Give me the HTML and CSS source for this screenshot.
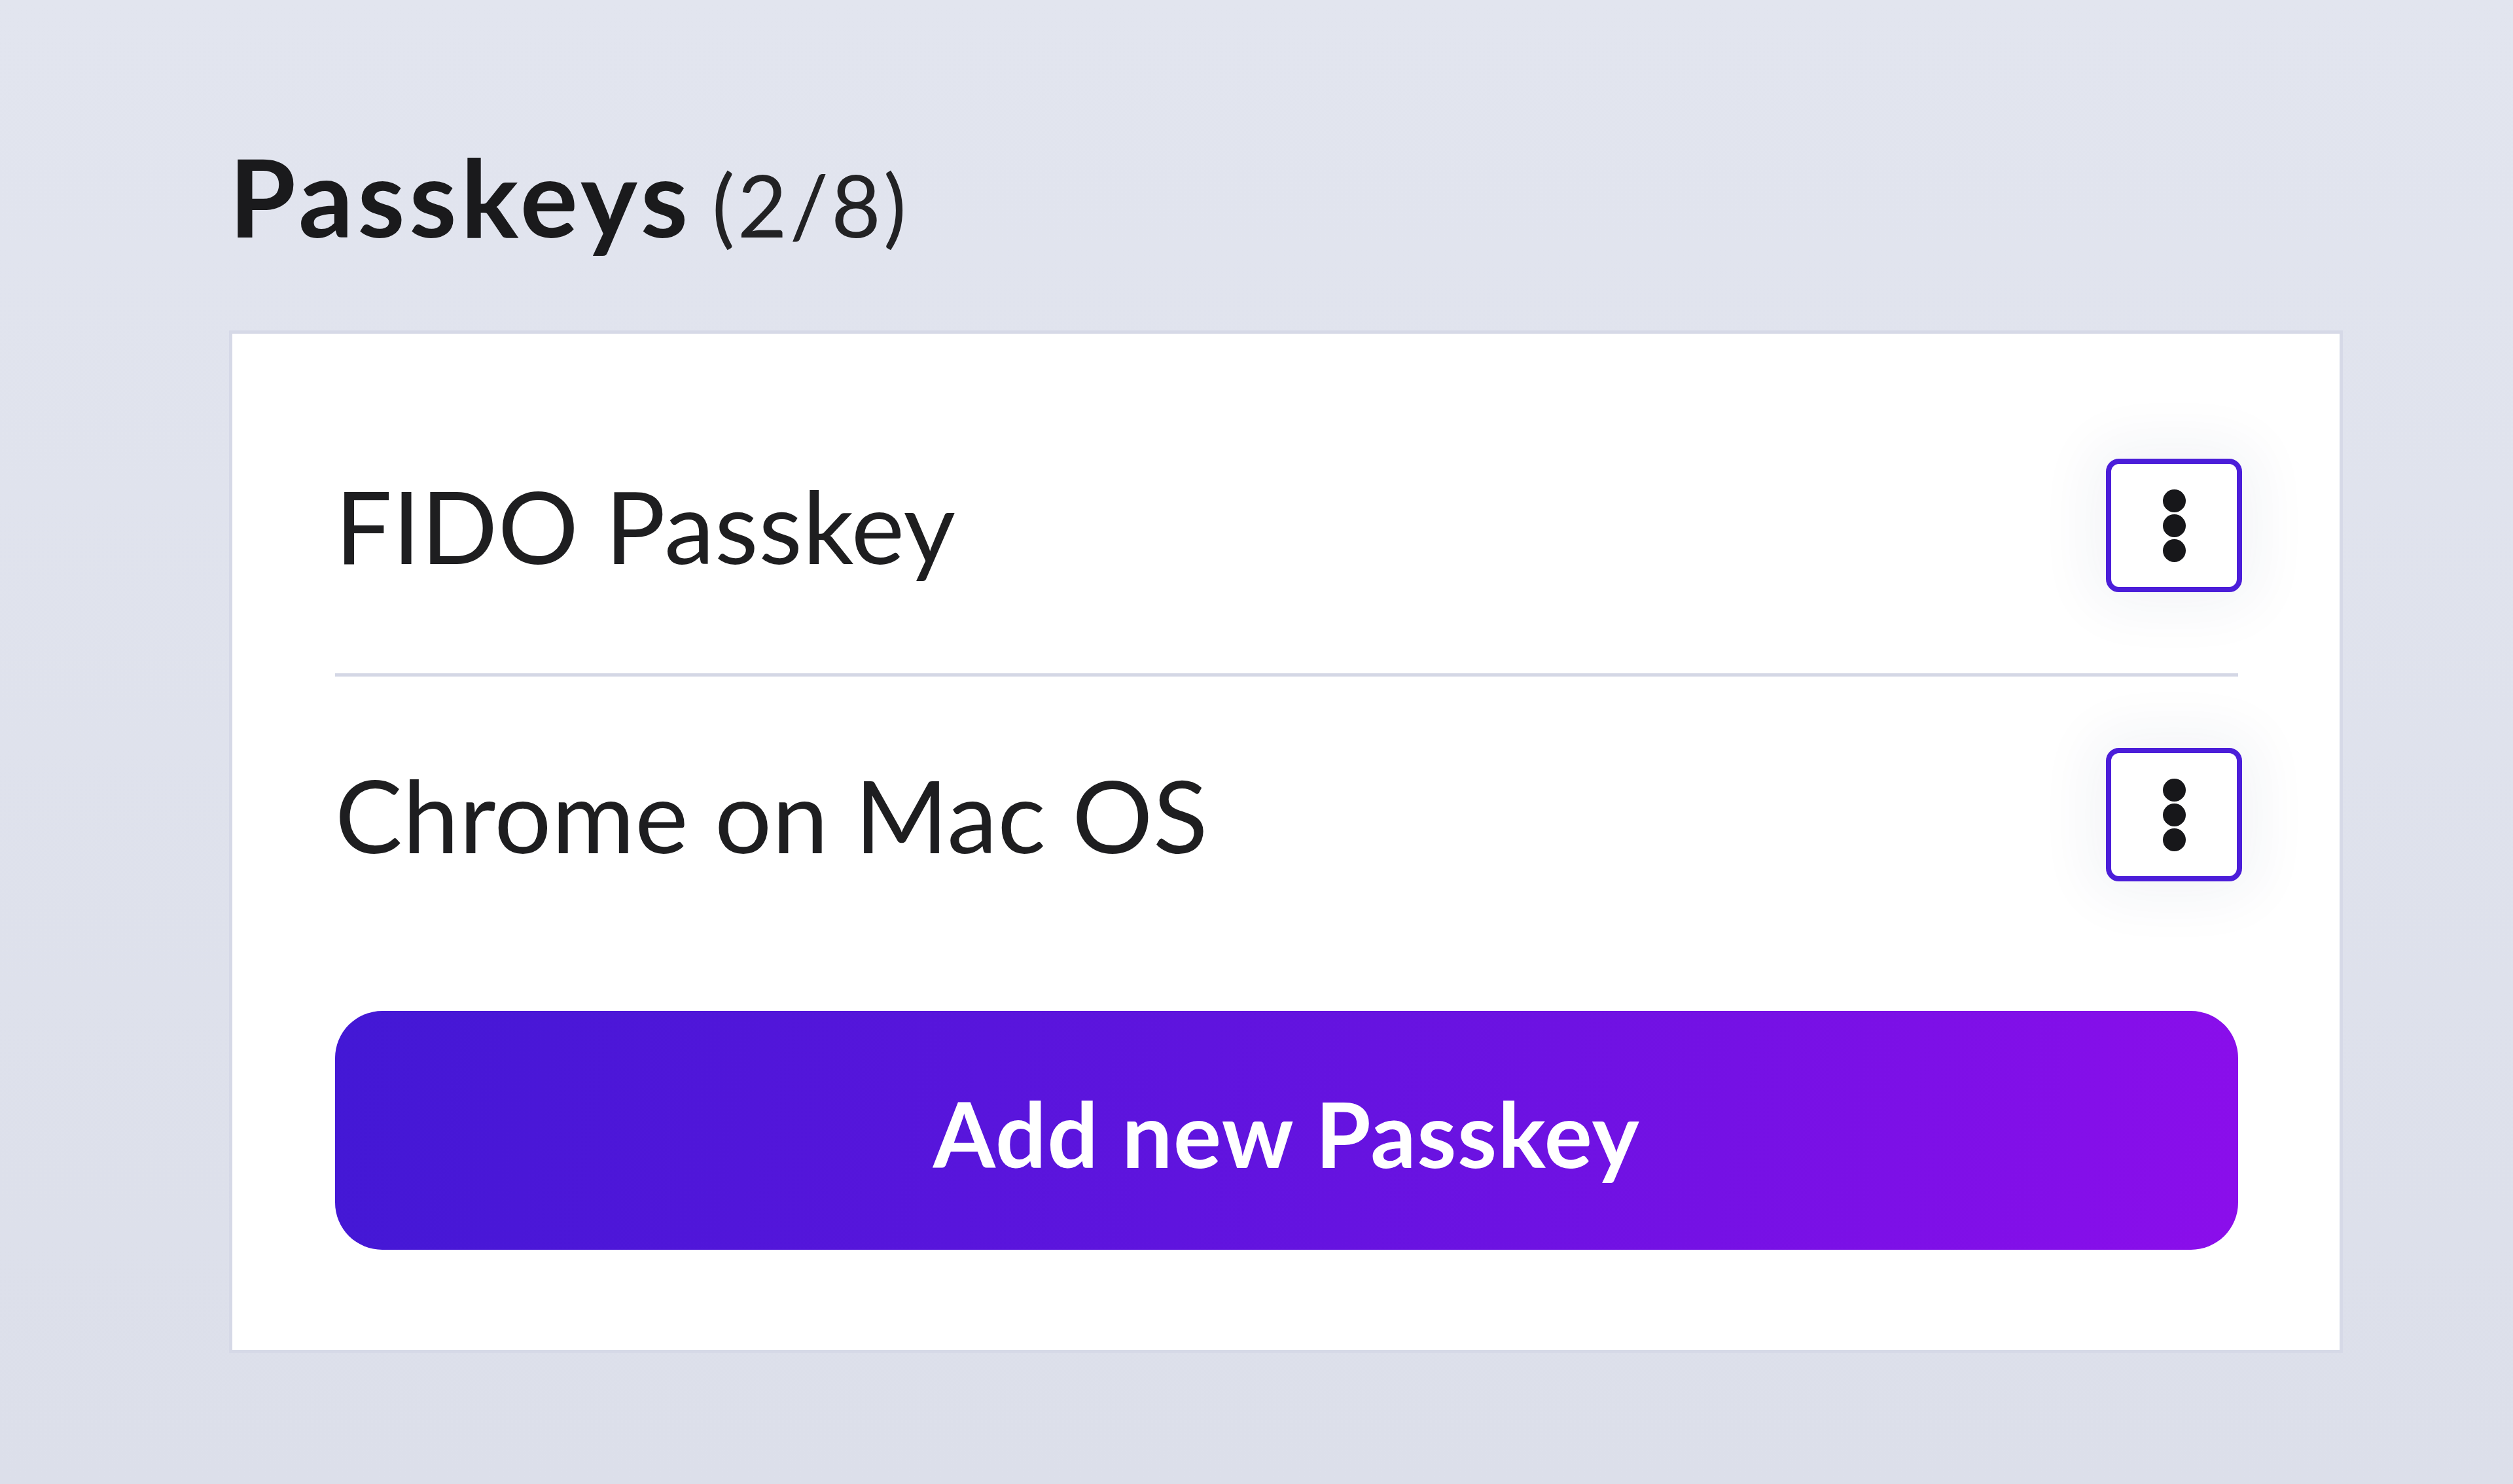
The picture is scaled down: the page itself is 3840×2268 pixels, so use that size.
FILE: index.html
```html
<!DOCTYPE html>
<html lang="en">
<head>
<meta charset="utf-8">
<title>Passkeys</title>
<link rel="stylesheet" href="styles.css">
</head>
<body>
<main class="page">
  <section class="panel">
    <h1 class="title"><span class="title-main">Passkeys</span><span class="title-count">(2/8)</span></h1>
    <div class="card">
      <div class="row">
        <span class="row-name">FIDO Passkey</span>
        <button class="kebab" type="button" aria-label="More options">
          <span class="dot"></span><span class="dot"></span><span class="dot"></span>
        </button>
      </div>
      <div class="divider"></div>
      <div class="row row-second">
        <span class="row-name">Chrome on Mac OS</span>
        <button class="kebab" type="button" aria-label="More options">
          <span class="dot"></span><span class="dot"></span><span class="dot"></span>
        </button>
      </div>
      <button class="add-btn" type="button">Add new Passkey</button>
    </div>
  </section>
</main>
</body>
</html>
```
FILE: styles.css
```css
html, body {
  margin: 0;
  padding: 0;
}

body {
  width: 3840px;
  height: 2268px;
  overflow: hidden;
  background: linear-gradient(180deg, #e2e5ef 0%, #dcdfea 100%);
  font-family: "Lato", "Liberation Sans", sans-serif;
  color: #1d1d1f;
}

.page {
  padding: 217px 0 0 350px;
}

.panel {
  width: 3230px;
}

.title {
  margin: 0 0 123px 0;
  display: flex;
  align-items: baseline;
  line-height: 165px;
  height: 165px;
}

.title-main {
  font-size: 165px;
  font-weight: 700;
  letter-spacing: 6.5px;
  color: #1a1a1c;
}

.title-count {
  margin-left: 30px;
  font-size: 131px;
  font-weight: 400;
  letter-spacing: 4px;
  color: #222224;
}

.card {
  background: #ffffff;
  border: 5px solid #d6d9e7;
  padding: 67px 155px 153px 157px;
  display: flex;
  flex-direction: column;
}

.row {
  height: 452px;
  display: flex;
  align-items: center;
  justify-content: space-between;
}

.row-second {
  height: 422px;
}

.row-name {
  font-size: 154px;
  line-height: 154px;
  font-weight: 400;
  letter-spacing: 0.5px;
  color: #1e1e20;
}

.kebab {
  width: 208px;
  height: 204px;
  margin-right: -6px;
  box-sizing: border-box;
  border: 8px solid #4b1dd9;
  border-radius: 20px;
  background: #ffffff;
  box-shadow: 0 0 90px 20px rgba(40, 50, 110, 0.06);
  padding: 0;
  display: flex;
  flex-direction: column;
  align-items: center;
  justify-content: center;
  gap: 3px;
}

.dot {
  width: 35px;
  height: 35px;
  border-radius: 50%;
  background: #17171a;
}

.divider {
  height: 5px;
  background: #d4d7e5;
}

.add-btn {
  margin-top: 89px;
  height: 365px;
  border: none;
  border-radius: 72px;
  background: linear-gradient(100deg, #4318d5 0%, #5f14de 45%, #8b0eeb 100%);
  color: #ffffff;
  font-family: "Lato", "Liberation Sans", sans-serif;
  font-size: 137px;
  font-weight: 700;
  letter-spacing: 1.5px;
  padding: 8px 0 0 0;
  text-align: center;
}
```
